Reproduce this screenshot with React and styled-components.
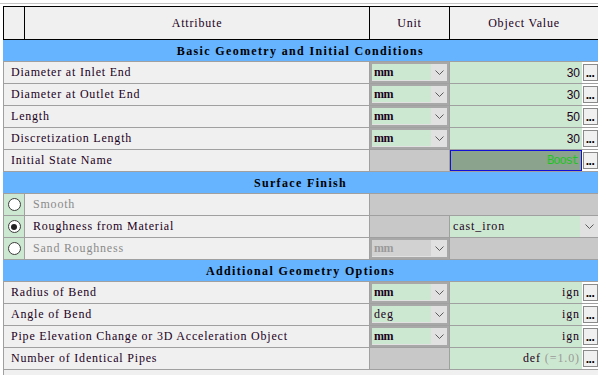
import React from "react";
import styled, { createGlobalStyle, css } from "styled-components";

const GlobalStyle = createGlobalStyle`
  html, body { margin: 0; padding: 0; background: #ffffff; }
  body { font-family: "Liberation Serif", "Times New Roman", serif; }
`;

const C = {
  line: "#a0a0a0",
  panel: "#f0f0f0",
  blue: "#66b3ff",
  green: "#cde8d0",
  gray: "#c8c8c8",
  text: "#1c001c",
  dim: "#8a8a8a",
};

const SERIF = '"Liberation Serif", "Times New Roman", serif';

const Page = styled.div`
  width: 598px;
  height: 375px;
  overflow: hidden;
  padding-top: 3px;
  box-sizing: border-box;
`;

const TopRule = styled.div`
  height: 1px;
  background: #c4c4c4;
`;

const Table = styled.div`
  margin-top: 2px;
  margin-left: 3px;
  width: 595px;
`;

const HeaderRow = styled.div`
  display: flex;
  height: 34px;
  box-sizing: border-box;
  border: 1px solid #000;
  border-right: none;
  background: ${C.panel};
`;

const HeadCell = styled.div`
  box-sizing: border-box;
  ${(p) => (p.$w ? css`width: ${p.$w}px;` : css`flex: 1;`)}
  border-right: ${(p) => (p.$w ? "1px solid #000" : "none")};
  display: flex;
  align-items: center;
  justify-content: center;
  font-family: ${SERIF};
  font-size: 12px;
  letter-spacing: 0.8px;
  color: ${C.text};
`;

const Band = styled.div`
  height: 22px;
  box-sizing: border-box;
  border-bottom: 1px solid ${C.line};
  background: ${C.blue};
  display: flex;
  align-items: center;
  justify-content: center;
  font-family: ${SERIF};
  font-size: 12px;
  font-weight: bold;
  letter-spacing: 1.35px;
  color: #000;
  padding-top: 1px;
`;

const Row = styled.div`
  display: flex;
  height: 22px;
  box-sizing: border-box;
  border-left: 1px solid ${C.line};
  border-bottom: 1px solid ${C.line};
  background: ${C.panel};
`;

const AttrCell = styled.div`
  width: 366px;
  box-sizing: border-box;
  border-right: 1px solid ${C.line};
  display: flex;
  align-items: center;
  padding-left: ${(p) => (p.$radio ? 0 : 7)}px;
  font-family: ${SERIF};
  font-size: 12px;
  letter-spacing: 0.8px;
  color: ${(p) => (p.$dim ? C.dim : C.text)};
  white-space: nowrap;
`;

const RadioBox = styled.div`
  width: 21px;
  height: 100%;
  box-sizing: border-box;
  border-right: 1px solid ${C.line};
  background: ${C.green};
  display: flex;
  align-items: center;
  justify-content: center;
  margin-right: 8px;
`;

const Radio = styled.div`
  width: 13px;
  height: 13px;
  box-sizing: border-box;
  border-radius: 50%;
  border: 1px solid #3c3c3c;
  background: #fff;
  display: flex;
  align-items: center;
  justify-content: center;
  &::after {
    content: "";
    width: 6px;
    height: 6px;
    border-radius: 50%;
    background: #222;
    display: ${(p) => (p.$on ? "block" : "none")};
  }
`;

const UnitCell = styled.div`
  width: 80px;
  box-sizing: border-box;
  border-right: 1px solid ${C.line};
  background: ${(p) => (p.$blank ? C.gray : C.panel)};
  display: flex;
`;

const ValueCell = styled.div`
  flex: 1;
  display: flex;
  background: ${(p) => (p.$blank ? C.gray : "#ffffff")};
`;

const Select = styled.div`
  flex: 1;
  display: flex;
  box-sizing: border-box;
  border: 2px solid #a8a8a8;
  background: #e1e1e1;
`;

const SelectField = styled.div`
  flex: 1;
  display: flex;
  align-items: center;
  padding-left: 2px;
  margin-bottom: 1px;
  background: ${(p) => (p.$disabled ? "#d2d2d2" : C.green)};
  color: ${(p) => (p.$disabled ? "#9a9a9a" : C.text)};
  font-family: ${SERIF};
  font-size: 12px;
  font-weight: ${(p) => (p.$bold ? "bold" : "normal")};
  letter-spacing: ${(p) => (p.$bold ? "-0.5px" : "0.8px")};
`;

const SelectArrow = styled.div`
  width: ${(p) => p.$w || 16}px;
  display: flex;
  align-items: center;
  justify-content: center;
  background: #e1e1e1;
`;

const ValueField = styled.div`
  flex: 1;
  display: flex;
  align-items: center;
  justify-content: ${(p) => (p.$left ? "flex-start" : "flex-end")};
  padding: ${(p) => (p.$left ? "0 0 0 3px" : p.$state ? "0 3px 0 0" : "0 2px 0 0")};
  box-sizing: border-box;
  background: ${(p) => (p.$state ? "#8ba28c" : C.green)};
  border: ${(p) => (p.$state ? "1px solid #1010d8" : "none")};
  color: ${(p) => (p.$state ? "#22c422" : C.text)};
  font-family: ${(p) =>
    p.$num
      ? '"Liberation Sans", Arial, sans-serif'
      : p.$state
      ? '"Liberation Mono", monospace'
      : SERIF};
  font-size: 12px;
  letter-spacing: ${(p) => (p.$num ? "0" : p.$state ? "-1px" : "0.9px")};
  white-space: pre;
`;

const Dim = styled.span`
  color: #9a9a9a;
`;

const ButtonSlot = styled.div`
  width: 16px;
  display: flex;
  align-items: center;
  justify-content: center;
  background: #ffffff;
`;

const DotsButton = styled.div`
  width: 15px;
  height: 17px;
  box-sizing: border-box;
  border: 1px solid #8a8a8a;
  background: #f0f0f0;
  display: flex;
  align-items: flex-end;
  justify-content: center;
  font-family: "Liberation Sans", Arial, sans-serif;
  font-weight: bold;
  font-size: 12px;
  line-height: 12px;
  letter-spacing: -0.5px;
  color: #000;
  padding-bottom: 1px;
`;

const TailRow = styled.div`
  height: 10px;
  border-left: 1px solid ${C.line};
  background: ${C.panel};
`;

const Chevron = () => (
  <svg width="9" height="5" viewBox="0 0 9 5">
    <polyline points="0.5,0.5 4.5,4.5 8.5,0.5" fill="none" stroke="#5a5a5a" strokeWidth="1" />
  </svg>
);

const UnitSelect = ({ unit, disabled }) => (
  <UnitCell>
    <Select>
      <SelectField $disabled={disabled} $bold={unit === "mm"}>
        {unit}
      </SelectField>
      <SelectArrow>
        <Chevron />
      </SelectArrow>
    </Select>
  </UnitCell>
);

const Dots = () => (
  <ButtonSlot>
    <DotsButton>...</DotsButton>
  </ButtonSlot>
);

const ParamRow = ({ label, unit, value, num, state, children }) => (
  <Row>
    <AttrCell>{label}</AttrCell>
    {unit ? <UnitSelect unit={unit} /> : <UnitCell $blank />}
    <ValueCell>
      <ValueField $num={num} $state={state}>
        {children || value}
      </ValueField>
      <Dots />
    </ValueCell>
  </Row>
);

export default function App() {
  return (
    <Page>
      <GlobalStyle />
      <TopRule />
      <Table>
        <HeaderRow>
          <HeadCell $w={21} />
          <HeadCell $w={345}>Attribute</HeadCell>
          <HeadCell $w={80}>Unit</HeadCell>
          <HeadCell>Object Value</HeadCell>
        </HeaderRow>

        <Band>Basic Geometry and Initial Conditions</Band>
        <ParamRow label="Diameter at Inlet End" unit="mm" value="30" num />
        <ParamRow label="Diameter at Outlet End" unit="mm" value="30" num />
        <ParamRow label="Length" unit="mm" value="50" num />
        <ParamRow label="Discretization Length" unit="mm" value="30" num />
        <ParamRow label="Initial State Name" value="Boost" state />

        <Band>Surface Finish</Band>
        <Row>
          <AttrCell $radio $dim>
            <RadioBox>
              <Radio />
            </RadioBox>
            Smooth
          </AttrCell>
          <ValueCell $blank />
        </Row>
        <Row>
          <AttrCell $radio>
            <RadioBox>
              <Radio $on />
            </RadioBox>
            Roughness from Material
          </AttrCell>
          <UnitCell $blank />
          <ValueCell>
            <ValueField $left>cast_iron</ValueField>
            <SelectArrow $w={18}>
              <Chevron />
            </SelectArrow>
          </ValueCell>
        </Row>
        <Row>
          <AttrCell $radio $dim>
            <RadioBox>
              <Radio />
            </RadioBox>
            Sand Roughness
          </AttrCell>
          <UnitSelect unit="mm" disabled />
          <ValueCell $blank />
        </Row>

        <Band>Additional Geometry Options</Band>
        <ParamRow label="Radius of Bend" unit="mm" value="ign" />
        <ParamRow label="Angle of Bend" unit="deg" value="ign" />
        <ParamRow label="Pipe Elevation Change or 3D Acceleration Object" unit="mm" value="ign" />
        <ParamRow label="Number of Identical Pipes">
          def <Dim>(=1.0)</Dim>
        </ParamRow>
        <TailRow />
      </Table>
    </Page>
  );
}
